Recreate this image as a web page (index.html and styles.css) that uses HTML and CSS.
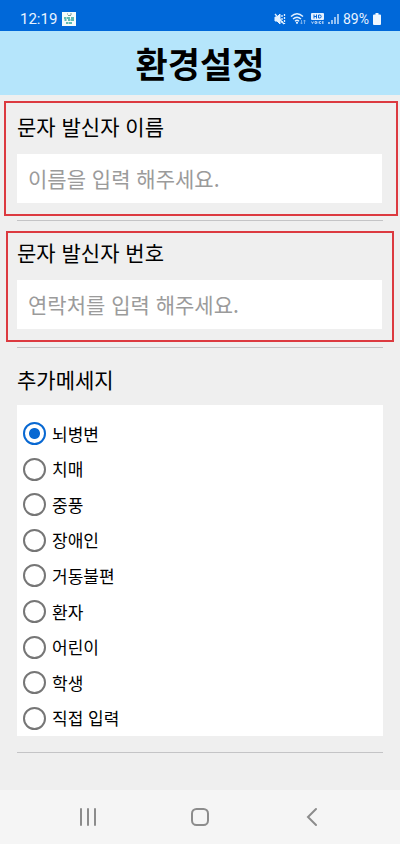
FILE: index.html
```html
<!DOCTYPE html>
<html lang="ko">
<head>
<meta charset="utf-8">
<meta name="viewport" content="width=device-width, initial-scale=1">
<title>환경설정</title>
<link rel="stylesheet" href="styles.css">
</head>
<body>
<div class="status">
  <div class="status-group">
    <span class="clock">12:19</span>
    <svg class="app-icon" width="14" height="14" viewBox="0 0 14 14" aria-hidden="true">
      <rect width="14" height="14" fill="#f4fbfa"/>
      <path d="M5 2h1M8 2h2M6 3.500h3" stroke="#7d9a98" stroke-width="1"/>
      <path d="M2 6h2.500M5 6h3M9 6h3M2.500 8h2M6 8h2.500M9 8h3M4 11h2.500M7 11h3" stroke="#2fa79c" stroke-width="1.600"/>
    </svg>
  </div>
  <div class="status-group status-right">
    <svg width="12" height="12" viewBox="0 0 12 12" fill="none" stroke="#e4f1ff" aria-hidden="true">
      <path d="M1 4h2l3-3v10L3 8H1z" fill="#e4f1ff"/>
      <path d="M1 1l9 10" stroke-width="1.300"/>
      <path d="M8 2v8M10.500 1v10" stroke-width="1.300" stroke-dasharray="2 1"/>
    </svg>
    <svg class="wifi" width="17" height="13" viewBox="0 0 17 13" fill="none" stroke="#e4f1ff" aria-hidden="true">
      <path d="M1 4.500Q7 -1 13 4.500M3 7Q7 3.400 11 7M5 9.200Q7 7.400 9 9.200" stroke-width="1.400"/>
      <circle cx="7" cy="10.800" r="1.100" fill="#e4f1ff" stroke="none"/>
      <path d="M11.500 8v4m-1-1.300 1 1.300 1-1.300M14.500 12V8m-1 1.300 1-1.300 1 1.300" stroke="#8bbdf0" stroke-width=".8"/>
    </svg>
    <svg class="hd" width="13" height="12" viewBox="0 0 13 12" aria-hidden="true">
      <rect width="13" height="7" rx="1" fill="#e4f1ff"/>
      <path d="M3 1.500v4M5.500 1.500v4M3 3.500h2.500M7.500 2v3H9q1.200-.2 1.200-1.500T9 2z" fill="none" stroke="#0869d8" stroke-width="1"/>
      <path d="M.5 8.500l1 2 1-2M4 8.500h1.500v2H4zM7 8.500v2M10 8.500H8.500v2H10M12.500 8.500h-1.200v2h1.200M11.500 9.500h1" fill="none" stroke="#d0e5fc" stroke-width=".8"/>
    </svg>
    <svg class="signal" width="11" height="12" viewBox="0 0 11 12" fill="none" stroke="#e4f1ff" stroke-width="1.300" aria-hidden="true">
      <path d="M1 9v2M4 7v4M7 4v7M10 1v10"/>
    </svg>
    <span class="percent">89%</span>
    <svg width="8" height="12" viewBox="0 0 8 12" fill="#f0f7ff" aria-hidden="true">
      <path d="M2.500 0h3v1.500H7q1 0 1 1V11q0 1-1 1H1q-1 0-1-1V2.500q0-1 1-1h1.500z"/>
    </svg>
  </div>
</div>

<header class="title-bar"><h1>환경설정</h1></header>

<main>
  <section class="field field-name">
    <label for="name">문자 발신자 이름</label>
    <input type="text" id="name" placeholder="이름을 입력 해주세요.">
  </section>
  <hr>
  <section class="field field-phone">
    <label for="phone">문자 발신자 번호</label>
    <input type="tel" id="phone" placeholder="연락처를 입력 해주세요.">
  </section>
  <hr>
  <fieldset class="extra">
    <legend>추가메세지</legend>
    <div class="options">
      <label><input type="radio" name="extra" checked>뇌병변</label>
      <label><input type="radio" name="extra">치매</label>
      <label><input type="radio" name="extra">중풍</label>
      <label><input type="radio" name="extra">장애인</label>
      <label><input type="radio" name="extra">거동불편</label>
      <label><input type="radio" name="extra">환자</label>
      <label><input type="radio" name="extra">어린이</label>
      <label><input type="radio" name="extra">학생</label>
      <label><input type="radio" name="extra">직접 입력</label>
    </div>
  </fieldset>
  <hr>
</main>

<nav class="nav-bar">
  <button type="button" aria-label="최근 앱">
    <svg width="20" height="20" viewBox="0 0 20 20"><path d="M3 2v16M10 2v16M17 2v16"/></svg>
  </button>
  <button type="button" aria-label="홈">
    <svg width="20" height="20" viewBox="0 0 20 20"><rect x="2" y="2" width="16" height="16" rx="4.500"/></svg>
  </button>
  <button type="button" aria-label="뒤로">
    <svg width="20" height="20" viewBox="0 0 20 20"><path d="M14 2L6 10l8 8"/></svg>
  </button>
</nav>
</body>
</html>
```
FILE: styles.css
```css
* {
  box-sizing: border-box;
}

body {
  margin: 0;
  min-height: 100vh;
  display: flex;
  flex-direction: column;
  background: #efefef;
  color: #000;
  font-family: "Noto Sans CJK KR", sans-serif;
}

.status {
  display: flex;
  justify-content: space-between;
  align-items: center;
  padding: 6px 19px 0 20px;
  height: 31px;
  background: #0068d9;
  color: #e8f3ff;
  font: 15px/24px Roboto, sans-serif;
}

.status-group {
  display: flex;
  align-items: center;
  gap: 5px;
}

.percent {
  font-size: 14px;
}

.status-right {
  gap: 4px;
}

.title-bar {
  background: #b5e5fb;
  text-align: center;
}

h1 {
  margin: 0;
  font-size: 35px;
  line-height: 64px;
  font-weight: 700;
}

main {
  flex: 1;
}

.field {
  display: flex;
  flex-direction: column;
  border: 2px solid #dc3a40;
}

.field-name {
  margin: 6px 2px 4px 4px;
  padding: 8px 14px 11px 11px;
}

.field-phone {
  margin: 10px 6px 5px;
  padding: 4px 10px 11px 9px;
}

.field label,
legend {
  padding: 0;
  font-size: 21px;
  line-height: 30px;
}

.field input {
  width: 100%;
  height: 49px;
  margin-top: 13px;
  padding: 0 11px 2px;
  border: 0;
  border-radius: 0;
  background: #fff;
  color: #000;
  font: inherit;
  font-size: 21px;
}

.field input::placeholder {
  color: #9b9b9b;
  opacity: 1;
}

hr {
  height: 1px;
  margin: 0 17px;
  border: 0;
  background: #c4c4c6;
}

.extra {
  min-width: 0;
  margin: 16px 17px;
  padding: 0;
  border: 0;
}

.options {
  display: grid;
  grid-auto-rows: 1fr;
  height: 331px;
  margin-top: 11px;
  padding: 11px 6px 0;
  background: #fff;
}

.options label {
  display: flex;
  align-items: center;
  gap: 6px;
  font-size: 17px;
  line-height: 24px;
}

.options input {
  appearance: none;
  flex: none;
  width: 23px;
  height: 23px;
  margin: 0;
  border: 2px solid #767676;
  border-radius: 50%;
  background: #fff;
}

.options input:checked {
  border-color: #0868d2;
  background: radial-gradient(circle, #0868d2 5px, #fff 6px);
}

.nav-bar {
  display: flex;
  justify-content: space-around;
  align-items: center;
  height: 54px;
  padding: 0 32px;
  background: #f5f5f5;
}

.nav-bar button {
  display: flex;
  justify-content: center;
  width: 48px;
  padding: 0;
  border: 0;
  background: none;
}

.nav-bar svg {
  fill: none;
  stroke: #8c8c8c;
  stroke-width: 2;
  stroke-linecap: round;
}
```
